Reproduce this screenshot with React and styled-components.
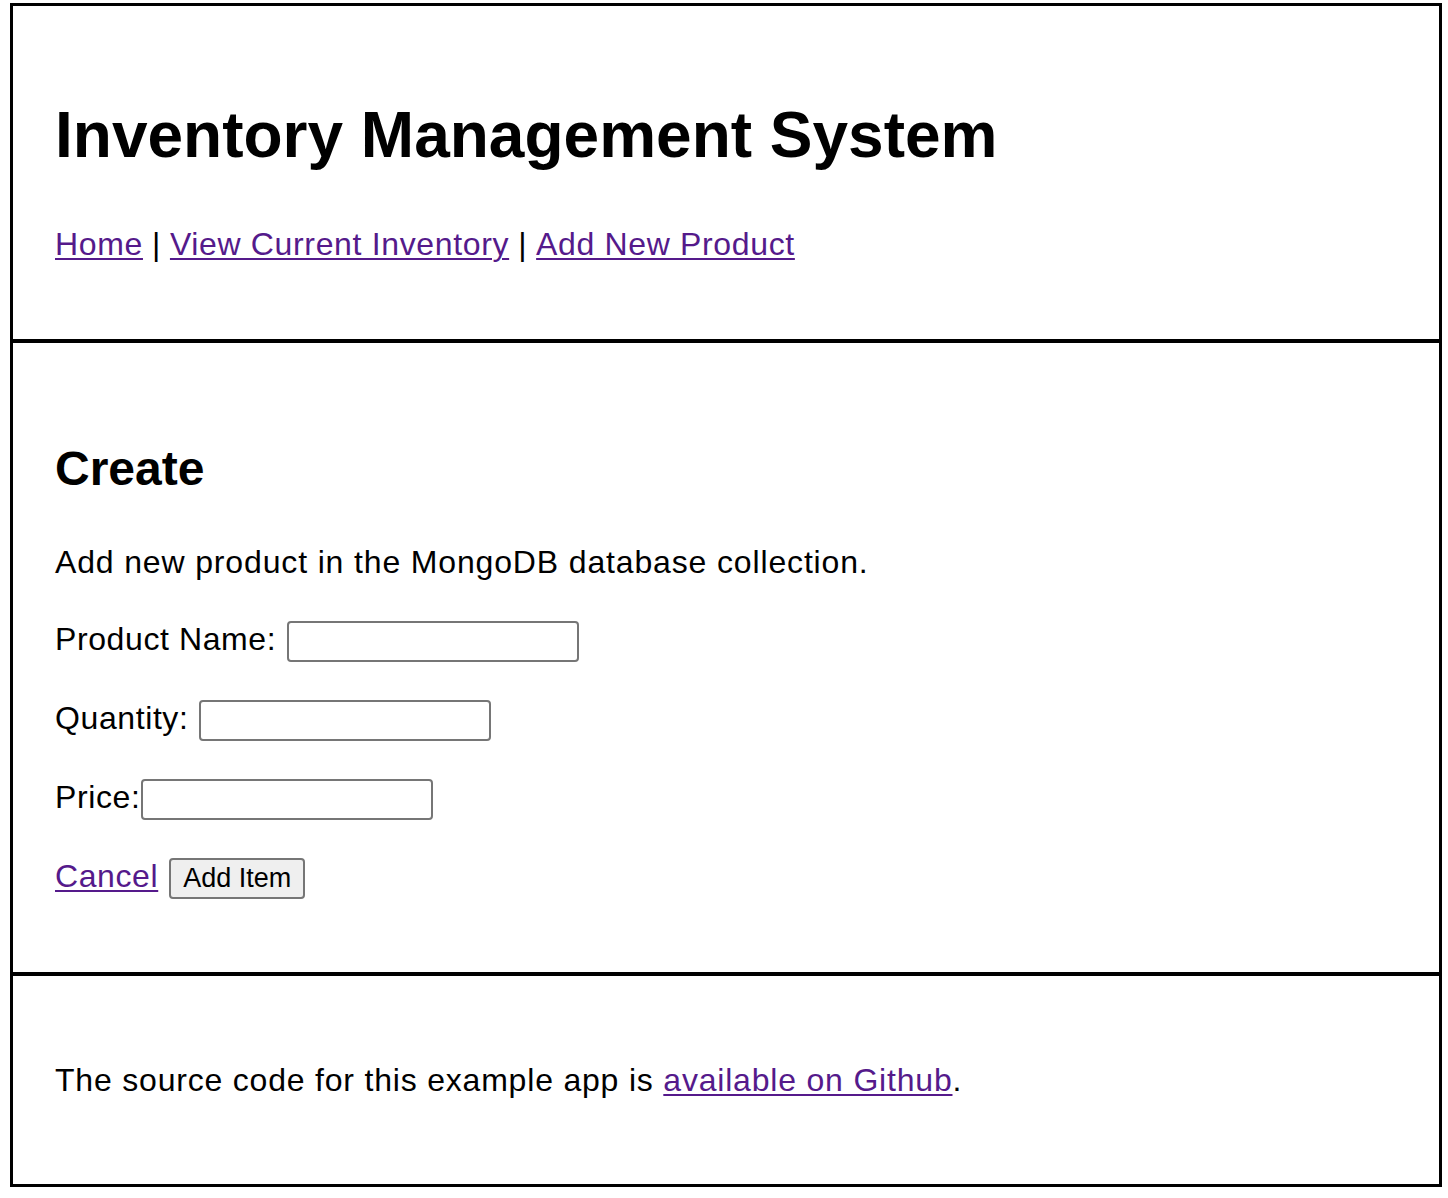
import React from "react";
import styled, { createGlobalStyle } from "styled-components";

const GlobalStyle = createGlobalStyle`
  html, body {
    margin: 0;
    padding: 0;
    background: #ffffff;
  }
  body {
    font-family: "Liberation Sans", Arial, sans-serif;
    color: #000000;
  }
`;

const Page = styled.div`
  margin: 3px 6px 0 10px;
  border: 3px solid #000;
  display: flex;
  flex-direction: column;
`;

const Section = styled.section`
  padding: ${(p) => p.pad};
  border-top: ${(p) => (p.first ? "none" : "4px solid #000")};
`;

const Title = styled.h1`
  margin: 0 0 54px;
  font-size: 64px;
  line-height: 74px;
  font-weight: 700;
`;

const Nav = styled.nav`
  font-size: 32px;
  line-height: 37px;
  letter-spacing: 0.65px;
`;

const Sep = styled.span`
  margin: 0 9px;
`;

const Link = styled.a`
  color: #551a8b;
  text-decoration: underline;
  text-underline-offset: 3px;
  text-decoration-thickness: 2px;
`;

const Heading = styled.h2`
  margin: 0 0 48px;
  font-size: 48px;
  line-height: 55px;
  font-weight: 700;
`;

const Text = styled.p`
  margin: 0;
  font-size: 32px;
  line-height: 37px;
  letter-spacing: ${(p) => p.spacing || 0.8}px;
`;

const Form = styled.form`
  display: flex;
  flex-direction: column;
  gap: 38px;
  margin-top: 40px;
`;

const Row = styled.div`
  display: flex;
  align-items: flex-start;
  gap: ${(p) => p.gap}px;
`;

const Label = styled.label`
  font-size: 32px;
  line-height: 37px;
  letter-spacing: 0.6px;
  white-space: nowrap;
`;

const Input = styled.input`
  box-sizing: border-box;
  width: 292px;
  height: 41px;
  margin: 0;
  border: 2px solid #767676;
  border-radius: 4px;
  background: #fff;
  font-size: 26px;
`;

const Button = styled.button`
  box-sizing: border-box;
  height: 41px;
  margin: 0;
  padding: 0 12px;
  border: 2px solid #767676;
  border-radius: 4px;
  background: #efefef;
  font-family: "Liberation Sans", Arial, sans-serif;
  font-size: 27px;
  color: #000;
`;

export default function App() {
  return (
    <>
      <GlobalStyle />
      <Page>
        <Section first pad="92px 40px 76px 42px">
          <Title>Inventory Management System</Title>
          <Nav>
            <Link href="#">Home</Link>
            <Sep>|</Sep>
            <Link href="#">View Current Inventory</Link>
            <Sep>|</Sep>
            <Link href="#">Add New Product</Link>
          </Nav>
        </Section>
        <Section pad="98px 40px 73px 42px">
          <Heading>Create</Heading>
          <Text spacing={0.85}>Add new product in the MongoDB database collection.</Text>
          <Form onSubmit={(e) => e.preventDefault()}>
            <Row gap={11}>
              <Label>Product Name:</Label>
              <Input type="text" />
            </Row>
            <Row gap={11}>
              <Label>Quantity:</Label>
              <Input type="text" />
            </Row>
            <Row gap={1}>
              <Label>Price:</Label>
              <Input type="text" />
            </Row>
            <Row gap={11}>
              <Label as="span">
                <Link href="#">Cancel</Link>
              </Label>
              <Button type="submit">Add Item</Button>
            </Row>
          </Form>
        </Section>
        <Section pad="86px 40px 85px 42px">
          <Text spacing={0.8}>
            The source code for this example app is{" "}
            <Link href="#">available on Github</Link>.
          </Text>
        </Section>
      </Page>
    </>
  );
}
